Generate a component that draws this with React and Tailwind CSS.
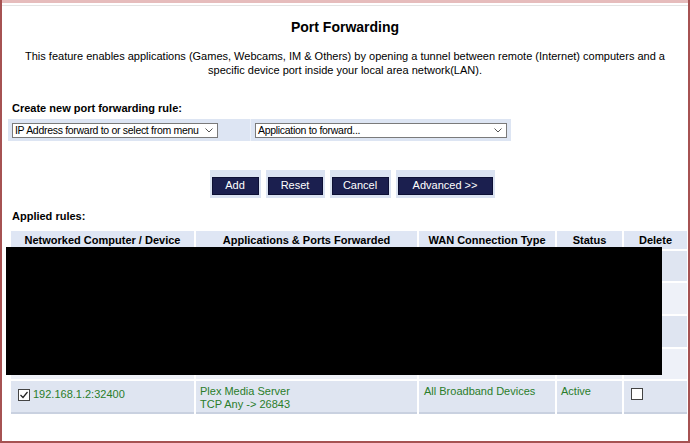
import React from 'react';

const rows = [
  { bg: 'bg-[#dfe5f1]', h: 'h-[32px]' },
  { bg: 'bg-[#eef1f8]', h: 'h-[33px]' },
  { bg: 'bg-[#dfe5f1]', h: 'h-[33px]' },
  { bg: 'bg-[#eef1f8]', h: 'h-[32px]' },
];

function NavyButton({ label, width }) {
  return (
    <div className="bg-[#dbe3f2] p-[2px]">
      <button
        className={`h-[18px] ${width} bg-[#1b1f4f] text-white text-[11px] border border-[#0d1035] leading-none`}
      >
        {label}
      </button>
    </div>
  );
}

function Select({ label, width }) {
  return (
    <div
      className={`${width} h-[15px] bg-white border border-[#7a7a7a] flex items-center justify-between pl-[2px] pr-[4px] text-[10.5px] text-black overflow-hidden`}
    >
      <span className="leading-none whitespace-nowrap tracking-[-0.3px]">{label}</span>
      <svg width="8" height="5" viewBox="0 0 8 5" className="shrink-0 ml-[4px]">
        <path d="M0.5 0.5 L4 4 L7.5 0.5" fill="none" stroke="#555" strokeWidth="1" />
      </svg>
    </div>
  );
}

function Check({ checked }) {
  return (
    <span className="inline-flex w-[12px] h-[12px] border border-[#444] bg-white items-center justify-center shrink-0">
      {checked && (
        <svg width="10" height="10" viewBox="0 0 10 10">
          <path d="M1.5 5 L4 7.5 L8.5 2" fill="none" stroke="#222" strokeWidth="1.2" />
        </svg>
      )}
    </span>
  );
}

export default function App() {
  return (
    <div
      className="relative w-[690px] h-[443px] bg-white border-x-2 border-b-2 border-[#a65252] overflow-hidden"
      style={{ fontFamily: '"Liberation Sans", Arial, sans-serif' }}
    >
      <div className="h-[3px] bg-[#e6bcbc]" />
      <div className="h-[2px] bg-white" />
      <div className="h-[1px] bg-[#e4e4e4]" />

      <h1 className="mt-[13px] text-center text-[14px] font-bold text-black leading-[16px]">
        Port Forwarding
      </h1>

      <p className="mt-[14px] px-[20px] text-center text-[11px] leading-[14px] text-black">
        This feature enables applications (Games, Webcams, IM &amp; Others) by opening a tunnel between remote (Internet) computers and a specific device port inside your local area network(LAN).
      </p>

      <div className="mt-[24px] pl-[10px] text-[11px] font-bold text-black leading-[14px]">
        Create new port forwarding rule:
      </div>

      <div className="mt-[4px] ml-[6px] w-[503px] h-[22px] bg-[#dde5f3] flex items-center">
        <div className="w-[242px] flex items-center pl-[4px] h-full">
          <Select label="IP Address forward to or select from menu" width="w-[206px]" />
        </div>
        <div className="w-[1px] h-full bg-[#eef2f9]" />
        <div className="flex items-center pl-[4px] h-full">
          <Select label="Application to forward..." width="w-[252px]" />
        </div>
      </div>

      <div className="mt-[29px] flex justify-center gap-[5px] pl-[14px]">
        <NavyButton label="Add" width="w-[47px]" />
        <NavyButton label="Reset" width="w-[55px]" />
        <NavyButton label="Cancel" width="w-[57px]" />
        <NavyButton label="Advanced >>" width="w-[95px]" />
      </div>

      <div className="mt-[11px] pl-[10px] text-[11px] font-bold text-black leading-[14px]">
        Applied rules:
      </div>

      <table className="mt-[8px] ml-[9px] w-[676px] border-collapse table-fixed text-[11px]">
        <colgroup>
          <col className="w-[184px]" />
          <col className="w-[223px]" />
          <col className="w-[138px]" />
          <col className="w-[67px]" />
          <col className="w-[64px]" />
        </colgroup>
        <thead>
          <tr className="h-[19px] bg-[#dfe6f4] font-bold text-black whitespace-nowrap">
            <th className="border-r-2 border-white text-center font-bold">Networked Computer / Device</th>
            <th className="border-r-2 border-white text-center font-bold">Applications &amp; Ports Forwarded</th>
            <th className="border-r-2 border-white text-center font-bold">WAN Connection Type</th>
            <th className="border-r-2 border-white text-center font-bold">Status</th>
            <th className="text-center font-bold">Delete</th>
          </tr>
        </thead>
        <tbody>
          {rows.map((r, i) => (
            <tr key={i} className={`${r.h} ${r.bg} border-t-2 border-white`}>
              <td className="border-r-2 border-white" />
              <td className="border-r-2 border-white" />
              <td className="border-r-2 border-white" />
              <td className="border-r-2 border-white" />
              <td />
            </tr>
          ))}
          <tr className="h-[33px] bg-[#dfe5f1] border-t-2 border-white border-b-2 border-b-[#c9d1e0] align-top text-[#2a7d2a]">
            <td className="border-r-2 border-white pl-[7px] pt-[7px]">
              <div className="flex items-center gap-[3px]">
                <Check checked />
                <span className="leading-[13px]">192.168.1.2:32400</span>
              </div>
            </td>
            <td className="border-r-2 border-white pl-[4px] pt-[4px] leading-[13px]">
              <div>Plex Media Server</div>
              <div>TCP Any -&gt; 26843</div>
            </td>
            <td className="border-r-2 border-white pl-[5px] pt-[4px] leading-[13px]">All Broadband Devices</td>
            <td className="border-r-2 border-white pl-[4px] pt-[4px] leading-[13px]">Active</td>
            <td className="pl-[7px] pt-[7px]">
              <Check />
            </td>
          </tr>
        </tbody>
      </table>

      <div className="absolute left-[4px] top-[247px] w-[656px] h-[128px] bg-black" />
    </div>
  );
}
